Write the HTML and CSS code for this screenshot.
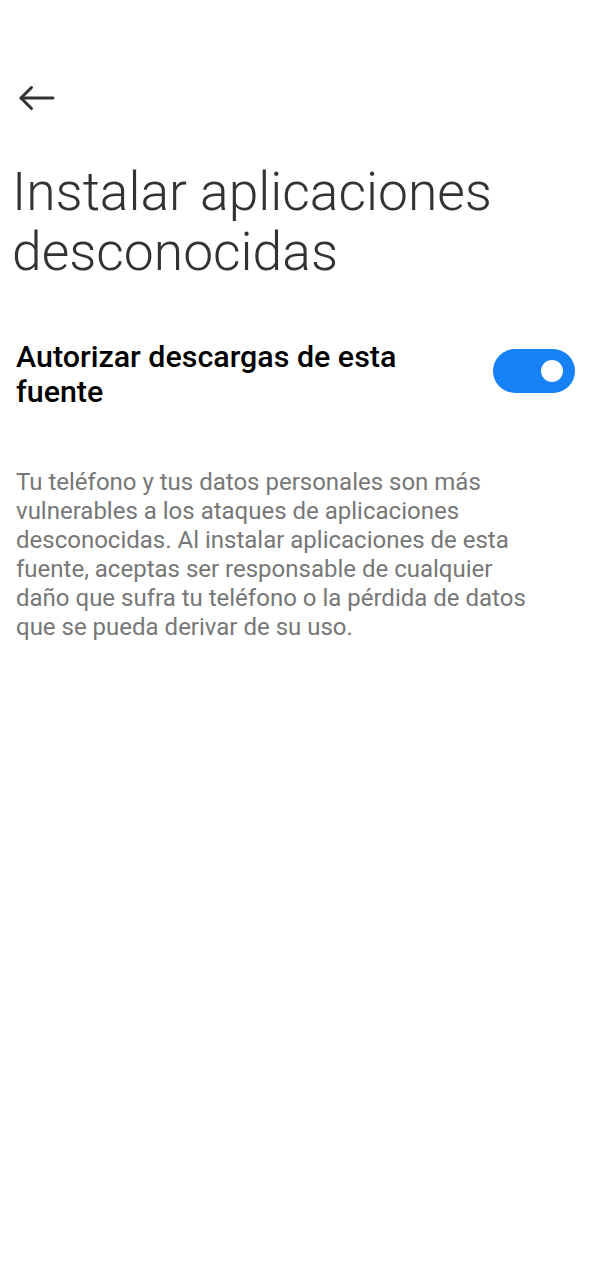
FILE: index.html
```html
<!DOCTYPE html>
<html lang="es">
<head>
  <meta charset="UTF-8">
  <title>Instalar aplicaciones desconocidas</title>
  <meta name="viewport" content="width=device-width, initial-scale=1.0">
  <link rel="stylesheet" href="styles.css">
</head>
<body>
  <header class="top-bar">
    <button class="btn-back" aria-label="Atrás">
      <svg width="38" height="30" viewBox="0 0 38 30" fill="none" stroke="#333" stroke-width="3" stroke-linecap="round" stroke-linejoin="round">
        <path d="M35 15H3"/>
        <path d="M13.5 4.5L3 15l10.5 10.5"/>
      </svg>
    </button>
  </header>

  <h1 class="page-title">Instalar aplicaciones desconocidas</h1>

  <div class="setting-row">
    <div class="setting-label">Autorizar descargas de esta fuente</div>
    <button class="switch on" aria-label="Autorizar descargas de esta fuente"><span class="knob"></span></button>
  </div>

  <p class="warning">Tu teléfono y tus datos personales son más vulnerables a los ataques de aplicaciones desconocidas. Al instalar aplicaciones de esta fuente, aceptas ser responsable de cualquier daño que sufra tu teléfono o la pérdida de datos que se pueda derivar de su uso.</p>
</body>
</html>
```

FILE: styles.css
```css
body {
  margin: 0;
  font-family: Roboto, 'Noto Sans', Arial, sans-serif;
  background: #fff;
  color: #000;
}

/* Header */
.top-bar { padding: 83px 0 0 18px; }
.btn-back {
  display: block;
  padding: 0;
  border: none;
  background: none;
  cursor: pointer;
  width: 38px;
  height: 30px;
}
.btn-back svg { display: block; }

/* Title */
.page-title {
  margin: 49px 0 0;
  padding: 0 12px;
  font-size: 53.4px;
  font-weight: 300;
  line-height: 60px;
  color: #333;
}

/* Setting row */
.setting-row {
  display: flex;
  align-items: center;
  justify-content: space-between;
  padding: 0 15px 0 16px;
  margin-top: 57px;
}
.setting-label {
  flex: 1;
  padding-right: 50px;
  font-size: 30.4px;
  font-weight: 500;
  line-height: 35px;
}
.switch {
  position: relative;
  width: 82px;
  height: 44px;
  margin-top: -6px;
  border: none;
  border-radius: 22px;
  background: #c8c8c8;
  cursor: pointer;
  flex-shrink: 0;
  padding: 0;
}
.switch.on { background: #1782f8; }
.switch .knob {
  position: absolute;
  top: 11px;
  right: 12px;
  width: 22px;
  height: 22px;
  border-radius: 50%;
  background: #fff;
}

/* Warning text */
.warning {
  margin: 59px 0 0;
  padding: 0 45px 0 16px;
  font-size: 24px;
  line-height: 29px;
  color: #777;
}
```
